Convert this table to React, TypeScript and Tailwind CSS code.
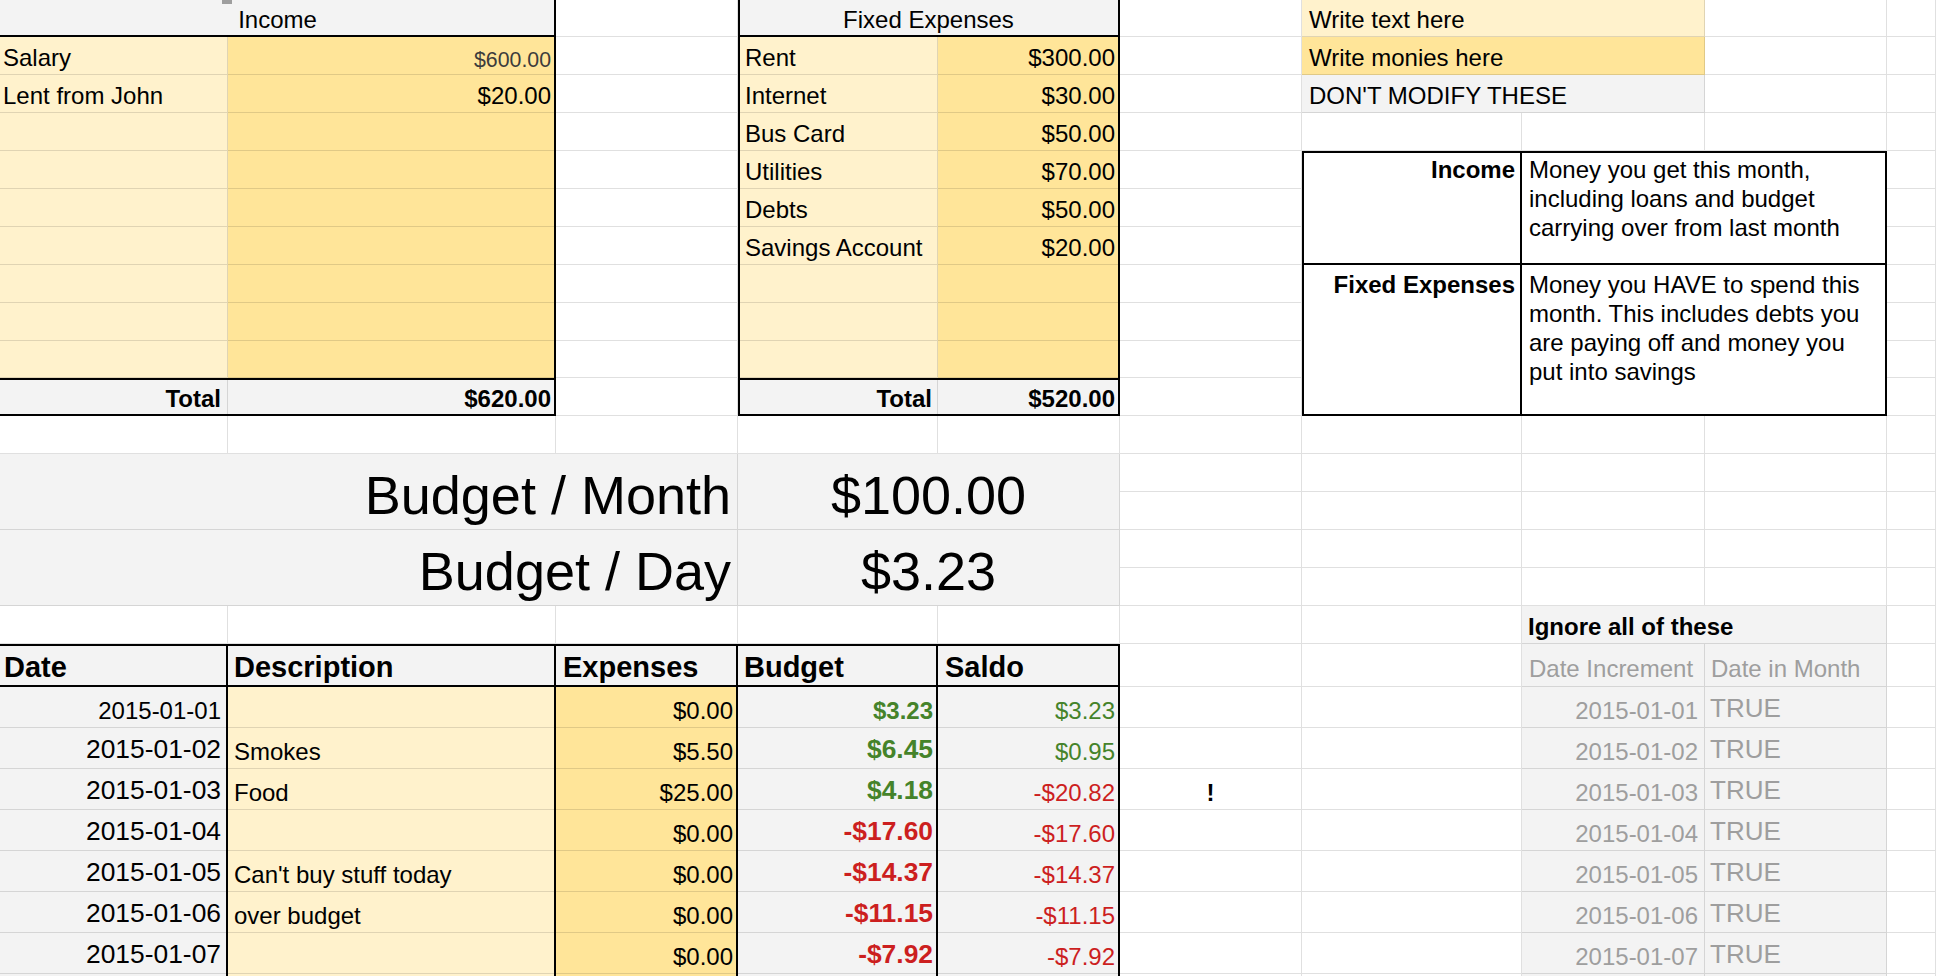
import React from "react";

const grid = "border-r border-b border-black/[0.12]";

type CellProps = { className?: string; children?: React.ReactNode };

function Cell({ className = "", children }: CellProps) {
  return (
    <div
      className={`flex min-w-0 items-end overflow-hidden whitespace-nowrap pb-[2px] text-[24px] leading-[28px] ${grid} ${className}`}
    >
      {children}
    </div>
  );
}

function Frame({ className }: { className: string }) {
  return <div className={`pointer-events-none z-10 border-black ${className}`} />;
}

const midRows = [
  "row-start-2",
  "row-start-3",
  "row-start-4",
  "row-start-5",
  "row-start-6",
  "row-start-7",
  "row-start-8",
  "row-start-9",
  "row-start-10",
];

const income = [
  { name: "Salary", value: "$600.00", small: true },
  { name: "Lent from John", value: "$20.00" },
];

const fixed = [
  { name: "Rent", value: "$300.00" },
  { name: "Internet", value: "$30.00" },
  { name: "Bus Card", value: "$50.00" },
  { name: "Utilities", value: "$70.00" },
  { name: "Debts", value: "$50.00" },
  { name: "Savings Account", value: "$20.00" },
];

const dataRows = [
  "row-start-19",
  "row-start-20",
  "row-start-21",
  "row-start-22",
  "row-start-23",
  "row-start-24",
  "row-start-25",
  "row-start-26",
];

const days = [
  { date: "2015-01-01", desc: "", exp: "$0.00", budget: "$3.23", saldo: "$3.23", up: true, down: true },
  { date: "2015-01-02", desc: "Smokes", exp: "$5.50", budget: "$6.45", saldo: "$0.95", up: true, down: true },
  { date: "2015-01-03", desc: "Food", exp: "$25.00", budget: "$4.18", saldo: "-$20.82", up: true, down: false },
  { date: "2015-01-04", desc: "", exp: "$0.00", budget: "-$17.60", saldo: "-$17.60", up: false, down: false },
  { date: "2015-01-05", desc: "Can't buy stuff today", exp: "$0.00", budget: "-$14.37", saldo: "-$14.37", up: false, down: false },
  { date: "2015-01-06", desc: "over budget", exp: "$0.00", budget: "-$11.15", saldo: "-$11.15", up: false, down: false },
  { date: "2015-01-07", desc: "", exp: "$0.00", budget: "-$7.92", saldo: "-$7.92", up: false, down: false },
  { date: "", desc: "", exp: "", budget: "", saldo: "", up: true, down: true },
];

const green = "text-[#45832a]";
const red = "text-[#cc1f1f]";

export default function App() {
  return (
    <div className="grid h-[976px] w-[1936px] grid-cols-[228px_328px_182px_200px_182px_182px_220px_183px_182px_1fr] grid-rows-[37px_38px_38px_38px_38px_38px_38px_38px_38px_37px_38px_38px_38px_38px_38px_38px_38px_43px_41px_41px_41px_41px_41px_41px_41px_41px] overflow-hidden bg-white font-['Liberation_Sans',Arial,sans-serif] text-black">
      {/* Income */}
      <Cell className="relative col-span-2 col-start-1 row-start-1 justify-center bg-[#f3f3f3]">
        Income
        <span className="absolute top-0 left-[222px] h-[4px] w-[10px] bg-[#9e9e9e]" />
      </Cell>
      {midRows.map((r, i) => (
        <React.Fragment key={r}>
          <Cell className={`col-start-1 ${r} bg-[#fff2cc] pl-[3px]`}>{income[i]?.name}</Cell>
          <Cell className={`col-start-2 ${r} justify-end bg-[#ffe599] pr-[4px]`}>
            {income[i]?.small ? (
              <span className="text-[21.3px] leading-[24px] text-[#3c3c3c]">{income[i]?.value}</span>
            ) : (
              income[i]?.value
            )}
          </Cell>
        </React.Fragment>
      ))}
      <Cell className="col-start-1 row-start-11 justify-end bg-[#f3f3f3] pr-[6px] font-bold">Total</Cell>
      <Cell className="col-start-2 row-start-11 justify-end bg-[#f3f3f3] pr-[4px] font-bold">$620.00</Cell>

      {/* Fixed expenses */}
      <Cell className="col-span-2 col-start-4 row-start-1 justify-center bg-[#f3f3f3]">Fixed Expenses</Cell>
      {midRows.map((r, i) => (
        <React.Fragment key={r}>
          <Cell className={`col-start-4 ${r} bg-[#fff2cc] pl-[7px]`}>{fixed[i]?.name}</Cell>
          <Cell className={`col-start-5 ${r} justify-end bg-[#ffe599] pr-[4px]`}>{fixed[i]?.value}</Cell>
        </React.Fragment>
      ))}
      <Cell className="col-start-4 row-start-11 justify-end bg-[#f3f3f3] pr-[5px] font-bold">Total</Cell>
      <Cell className="col-start-5 row-start-11 justify-end bg-[#f3f3f3] pr-[4px] font-bold">$520.00</Cell>

      {/* Legend */}
      <Cell className="col-span-2 col-start-7 row-start-1 bg-[#fff2cc] pl-[7px]">Write text here</Cell>
      <Cell className="col-span-2 col-start-7 row-start-2 bg-[#ffe599] pl-[7px]">Write monies here</Cell>
      <Cell className="col-span-2 col-start-7 row-start-3 bg-[#f3f3f3] pl-[7px]">DON'T MODIFY THESE</Cell>

      {/* Explanations */}
      <Cell className="col-start-7 row-span-3 row-start-5 items-start justify-end bg-white pt-[4px] pr-[6px] leading-[29px] font-bold">
        Income
      </Cell>
      <Cell className="col-span-2 col-start-8 row-span-3 row-start-5 items-start bg-white pt-[4px] pl-[7px] leading-[29px]">
        <div>
          Money you get this month,
          <br />
          including loans and budget
          <br />
          carrying over from last month
        </div>
      </Cell>
      <Cell className="col-start-7 row-span-4 row-start-8 items-start justify-end bg-white pt-[5px] pr-[6px] leading-[29px] font-bold">
        Fixed Expenses
      </Cell>
      <Cell className="col-span-2 col-start-8 row-span-4 row-start-8 items-start bg-white pt-[5px] pl-[7px] leading-[29px]">
        <div>
          Money you HAVE to spend this
          <br />
          month. This includes debts you
          <br />
          are paying off and money you
          <br />
          put into savings
        </div>
      </Cell>

      {/* Budget summary */}
      <Cell className="col-span-3 col-start-1 row-span-2 row-start-13 justify-end bg-[#f3f3f3] pr-[6px] pb-[4px] text-[54px] leading-[60px]">
        Budget / Month
      </Cell>
      <Cell className="col-span-2 col-start-4 row-span-2 row-start-13 justify-center bg-[#f3f3f3] pb-[4px] text-[54px] leading-[60px]">
        $100.00
      </Cell>
      <Cell className="col-span-3 col-start-1 row-span-2 row-start-15 justify-end bg-[#f3f3f3] pr-[6px] pb-[4px] text-[54px] leading-[60px]">
        Budget / Day
      </Cell>
      <Cell className="col-span-2 col-start-4 row-span-2 row-start-15 justify-center bg-[#f3f3f3] pb-[4px] text-[54px] leading-[60px]">
        $3.23
      </Cell>

      {/* Daily table */}
      <Cell className="col-start-1 row-start-18 bg-[#f3f3f3] pb-[3px] pl-[4px] text-[29px] leading-[32px] font-bold">Date</Cell>
      <Cell className="col-start-2 row-start-18 bg-[#f3f3f3] pb-[3px] pl-[6px] text-[29px] leading-[32px] font-bold">Description</Cell>
      <Cell className="col-start-3 row-start-18 bg-[#f3f3f3] pb-[3px] pl-[7px] text-[29px] leading-[32px] font-bold">Expenses</Cell>
      <Cell className="col-start-4 row-start-18 bg-[#f3f3f3] pb-[3px] pl-[6px] text-[29px] leading-[32px] font-bold">Budget</Cell>
      <Cell className="col-start-5 row-start-18 bg-[#f3f3f3] pb-[3px] pl-[7px] text-[29px] leading-[32px] font-bold">Saldo</Cell>
      {days.map((d, i) => {
        const first = i === 0;
        const r = dataRows[i];
        return (
          <React.Fragment key={r}>
            <Cell
              className={`col-start-1 ${r} justify-end bg-[#f3f3f3] pr-[6px] ${first ? "" : "pb-[4px] text-[26.4px] leading-[30px]"}`}
            >
              {d.date}
            </Cell>
            <Cell className={`col-start-2 ${r} bg-[#fff2cc] pl-[6px]`}>{d.desc}</Cell>
            <Cell className={`col-start-3 ${r} justify-end bg-[#ffe599] pr-[4px]`}>{d.exp}</Cell>
            <Cell
              className={`col-start-4 ${r} justify-end bg-[#f3f3f3] pr-[4px] font-bold ${d.up ? green : red} ${first ? "" : "pb-[4px] text-[26.4px] leading-[30px]"}`}
            >
              {d.budget}
            </Cell>
            <Cell className={`col-start-5 ${r} justify-end bg-[#f3f3f3] pr-[4px] ${d.down ? green : red}`}>{d.saldo}</Cell>
          </React.Fragment>
        );
      })}
      <Cell className="col-start-6 row-start-21 justify-center font-bold">!</Cell>

      {/* Helper columns */}
      <Cell className="col-span-2 col-start-8 row-start-17 bg-[#f3f3f3] pl-[6px] font-bold">Ignore all of these</Cell>
      <Cell className="col-start-8 row-start-18 bg-[#f3f3f3] pb-[3px] pl-[7px] text-[#9e9e9e]">Date Increment</Cell>
      <Cell className="col-start-9 row-start-18 bg-[#f3f3f3] pb-[3px] pl-[6px] text-[#9e9e9e]">Date in Month</Cell>
      {days.map((d, i) => {
        const r = dataRows[i];
        return (
          <React.Fragment key={`h-${r}`}>
            <Cell className={`col-start-8 ${r} justify-end bg-[#f3f3f3] pr-[6px] text-[#9e9e9e]`}>{d.date}</Cell>
            <Cell className={`col-start-9 ${r} bg-[#f3f3f3] pb-[4px] pl-[5px] text-[26px] leading-[30px] text-[#9e9e9e]`}>
              {d.date ? "TRUE" : ""}
            </Cell>
          </React.Fragment>
        );
      })}

      {/* Black borders */}
      <Frame className="col-span-2 col-start-1 row-span-11 row-start-1 border-r-2 border-b-2" />
      <Frame className="col-span-2 col-start-1 row-start-1 border-b-2" />
      <Frame className="col-span-2 col-start-1 row-start-11 border-t-2" />
      <Frame className="col-span-2 col-start-4 row-span-11 row-start-1 border-x-2 border-b-2" />
      <Frame className="col-span-2 col-start-4 row-start-1 border-b-2" />
      <Frame className="col-span-2 col-start-4 row-start-11 border-t-2" />
      <Frame className="col-span-3 col-start-7 row-span-7 row-start-5 border-2" />
      <Frame className="col-span-3 col-start-7 row-span-3 row-start-5 border-b-2" />
      <Frame className="col-start-7 row-span-7 row-start-5 border-r-2" />
      <Frame className="col-span-5 col-start-1 row-span-9 row-start-18 border-t-2 border-r-2" />
      <Frame className="col-span-5 col-start-1 row-start-18 border-b-2" />
      <Frame className="col-start-1 row-span-9 row-start-18 border-r-2" />
      <Frame className="col-start-2 row-span-9 row-start-18 border-r-2" />
      <Frame className="col-start-3 row-span-9 row-start-18 border-r-2" />
      <Frame className="col-start-4 row-span-9 row-start-18 border-r-2" />

      {/* Empty gridline cells fill whatever is left */}
      {Array.from({ length: 260 }, (_, i) => (
        <div key={`g-${i}`} className={grid} />
      ))}
    </div>
  );
}
